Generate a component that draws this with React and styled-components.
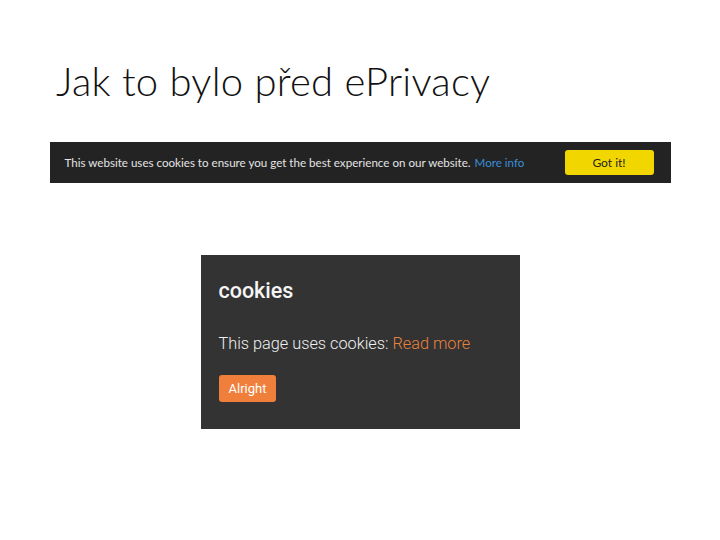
import React from "react";
import styled, { createGlobalStyle } from "styled-components";

const GlobalStyle = createGlobalStyle`
  html, body {
    margin: 0;
    padding: 0;
    background: #ffffff;
  }
`;

const Slide = styled.div`
  width: 720px;
  height: 540px;
  display: flex;
  flex-direction: column;
  align-items: center;
  background: #fff;
`;

const Title = styled.h1`
  align-self: flex-start;
  margin: 56px 0 0 56px;
  font-family: "Lato", "Open Sans", sans-serif;
  font-weight: 300;
  font-size: 40px;
  line-height: 50px;
  color: #111;
  letter-spacing: 0.25px;
`;

const Banner = styled.div`
  margin-top: 36px;
  width: 621px;
  height: 41px;
  box-sizing: border-box;
  background: #232323;
  display: flex;
  align-items: center;
  justify-content: space-between;
  padding: 0 17px 0 15px;
`;

const BannerText = styled.span`
  font-family: "Lato", "Open Sans", sans-serif;
  font-size: 11.6px;
  color: #e4e4e4;
`;

const BannerLink = styled.a`
  color: #3a8fd8;
  margin-left: 4px;
  text-decoration: none;
`;

const GotIt = styled.button`
  width: 89px;
  height: 25px;
  border: none;
  border-radius: 3px;
  background: #f1d600;
  color: #222;
  font-family: "Lato", "Open Sans", sans-serif;
  font-size: 12px;
  padding: 0;
`;

const Box = styled.div`
  margin-top: 72px;
  width: 319px;
  height: 174px;
  box-sizing: border-box;
  background: #333333;
  padding: 23px 18px 0 18px;
  display: flex;
  flex-direction: column;
  align-items: flex-start;
`;

const BoxTitle = styled.div`
  font-family: "Roboto", sans-serif;
  font-weight: 500;
  font-size: 21.5px;
  line-height: 26px;
  color: #f5f5f5;
`;

const BoxText = styled.div`
  margin-top: 30px;
  font-family: "Roboto", sans-serif;
  font-weight: 300;
  font-size: 16.3px;
  line-height: 20px;
  color: #f0f0f0;
`;

const BoxLink = styled.a`
  color: #e8823e;
  text-decoration: none;
`;

const Alright = styled.button`
  margin-top: 21px;
  height: 27px;
  padding: 0 10px;
  border: none;
  border-radius: 3px;
  background: #f07f3c;
  color: #fff;
  font-family: "Roboto", sans-serif;
  font-size: 13px;
`;

export default function App() {
  return (
    <>
      <GlobalStyle />
      <Slide>
        <Title>Jak to bylo před ePrivacy</Title>
        <Banner>
          <BannerText>
            This website uses cookies to ensure you get the best experience on our website.
            <BannerLink>More info</BannerLink>
          </BannerText>
          <GotIt>Got it!</GotIt>
        </Banner>
        <Box>
          <BoxTitle>cookies</BoxTitle>
          <BoxText>
            This page uses cookies: <BoxLink>Read more</BoxLink>
          </BoxText>
          <Alright>Alright</Alright>
        </Box>
      </Slide>
    </>
  );
}
